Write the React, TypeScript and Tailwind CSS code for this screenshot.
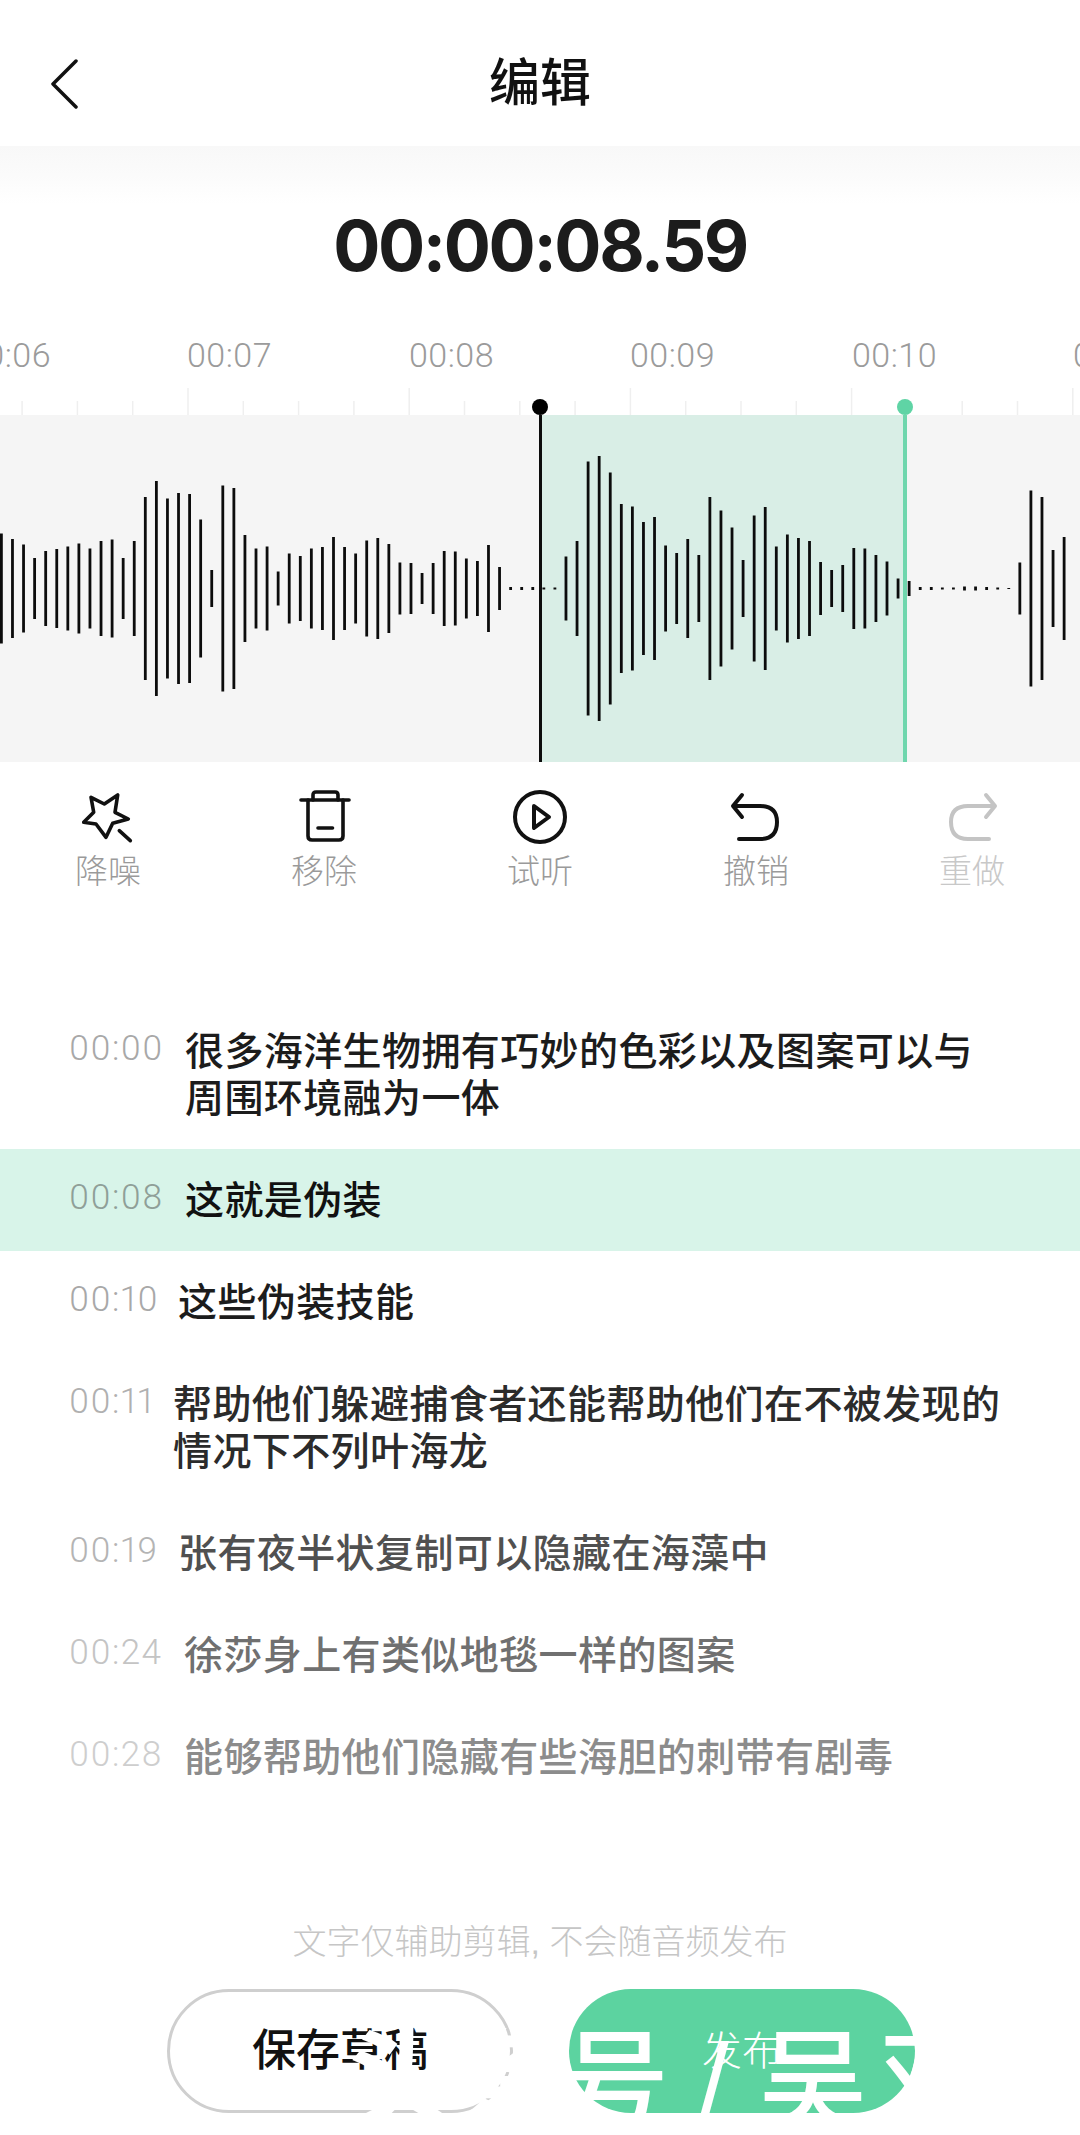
const CJK = "font-['Liberation_Sans','Noto_Sans_CJK_SC',sans-serif]"

// [bar height] on an 11.07px grid starting at x=1.4
const bars = [
  110, 99, 88, 61, 75, 79, 84, 90, 80, 95, 98, 61, 95, 183, 215, 180, 191, 189, 138, 37, 206, 201, 107, 80, 84, 34, 70,
  65, 80, 83, 103, 83, 70, 96, 101, 89, 52, 51, 31, 51, 75, 74, 60, 55, 87, 43, 3, 3, 3, 2, 2, 64, 95, 254, 265, 232,
  169, 164, 133, 143, 86, 71, 99, 67, 183, 156, 122, 57, 146, 163, 84, 108, 101, 95, 53, 37, 47, 81, 80, 67, 54, 20, 15,
  3, 3, 2, 2, 4, 4, 3, 2, 1, 52, 196, 183, 77, 103,
]

const rows = [
  { time: '00:00', timeColor: 'text-[#a8a8a8]', color: 'text-[#1c1c1c]', lines: ['很多海洋生物拥有巧妙的色彩以及图案可以与', '周围环境融为一体'], indent: 'w-[185px]' },
  { time: '00:08', timeColor: 'text-[#8f9f98]', color: 'text-[#111]', lines: ['这就是伪装'], indent: 'w-[185px]', active: true },
  { time: '00:10', timeColor: 'text-[#a8a8a8]', color: 'text-[#1c1c1c]', lines: ['这些伪装技能'], indent: 'w-[178px]' },
  { time: '00:11', timeColor: 'text-[#b0b0b0]', color: 'text-[#2b2b2b]', lines: ['帮助他们躲避捕食者还能帮助他们在不被发现的', '情况下不列叶海龙'], indent: 'w-[173px]' },
  { time: '00:19', timeColor: 'text-[#b4b4b4]', color: 'text-[#505050]', lines: ['张有夜半状复制可以隐藏在海藻中'], indent: 'w-[178px]' },
  { time: '00:24', timeColor: 'text-[#c4c4c4]', color: 'text-[#707070]', lines: ['徐莎身上有类似地毯一样的图案'], indent: 'w-[184px]' },
  { time: '00:28', timeColor: 'text-[#cecece]', color: 'text-[#8c8c8c]', lines: ['能够帮助他们隐藏有些海胆的刺带有剧毒'], indent: 'w-[184px]' },
]

const tools = [
  { label: '降噪', color: 'text-[#9a9a9a]', icon: <Star /> },
  { label: '移除', color: 'text-[#9a9a9a]', icon: <Bin /> },
  { label: '试听', color: 'text-[#9a9a9a]', icon: <Play /> },
  { label: '撤销', color: 'text-[#9a9a9a]', icon: <Undo /> },
  { label: '重做', color: 'text-[#c8c8c8]', icon: <Redo /> },
]

function Star() {
  return (
    <svg width="60" height="54" viewBox="0 0 60 54" fill="none" stroke="#111" strokeWidth="3.6" strokeLinejoin="round" strokeLinecap="round">
      <path d="M13 7.3 L26.3 14 L39.7 5 L37 22.3 L50.3 29 L34.7 33.3 L28 47.3 L18 34 L5.7 32.3 L15.7 22.3 Z" />
      <path d="M41.3 40.7 L52.3 50.7" />
    </svg>
  )
}

function Bin() {
  return (
    <svg width="60" height="54" viewBox="0 0 60 54" fill="none" stroke="#111" strokeWidth="3.6" strokeLinejoin="round" strokeLinecap="round">
      <path d="M7 10 H55" />
      <path d="M19 10 V5 Q19 2 22 2 H41 Q44 2 44 5 V10" />
      <path d="M14 10 V46 Q14 50 18 50 H45 Q49 50 49 46 V10" />
      <path d="M24 38 H38.5" />
    </svg>
  )
}

function Play() {
  return (
    <svg width="60" height="54" viewBox="0 0 60 54" fill="none" stroke="#111" strokeWidth="4" strokeLinejoin="round">
      <circle cx="30" cy="27" r="25" />
      <path d="M24 16 L39 27 L24 38 Z" />
    </svg>
  )
}

function Undo() {
  return (
    <svg width="60" height="54" viewBox="0 0 60 54" fill="none" stroke="#111" strokeWidth="4" strokeLinejoin="round" strokeLinecap="round">
      <path d="M16 5 L7 16 L16 27" />
      <path d="M8 16 H34 Q51 16 51 32 Q51 49 34 49 H13" />
    </svg>
  )
}

function Redo() {
  return (
    <svg width="60" height="54" viewBox="0 0 60 54" fill="none" stroke="#c4c4c4" strokeWidth="4" strokeLinejoin="round" strokeLinecap="round">
      <path d="M44 5 L53 16 L44 27" />
      <path d="M52 16 H26 Q9 16 9 32 Q9 49 26 49 H47" />
    </svg>
  )
}

function Ruler() {
  const ticks = []
  for (let i = -1; i < 20; i++) {
    const x = 188 + (i - 3) * 55.3
    const major = (i - 3) % 4 === 0
    ticks.push(<line key={i} x1={x} x2={x} y1={major ? 0 : 13} y2="27" stroke="#efefef" strokeWidth="1.5" />)
  }
  return (
    <svg width="1080" height="27" className="block">
      {ticks}
    </svg>
  )
}

function Wave() {
  return (
    <svg width="1080" height="347" className="absolute left-0 top-0">
      {bars.map((h, i) => (
        <rect key={i} x={0 + i * 11.07} y={173.5 - h / 2} width="2.8" height={h} fill="#0c0c0c" />
      ))}
    </svg>
  )
}

export default function App() {
  return (
    <div className={`relative w-[1080px] h-[2135px] overflow-hidden bg-white ${CJK}`}>
      {/* nav */}
      <div className="relative flex h-[146px] items-center justify-center pt-[20px]">
        <svg width="30" height="50" viewBox="0 0 30 50" fill="none" stroke="#111" strokeWidth="3.5" strokeLinecap="round" strokeLinejoin="round" className="absolute left-[49px] top-[59px]">
          <path d="M27 2 L4 25 L27 48" />
        </svg>
        <div className="text-[51px] font-medium leading-none text-[#111]">编辑</div>
      </div>
      <div className="h-[58px] bg-gradient-to-b from-[#f8f8f8] via-[#fbfbfb] to-white" />

      <div className="mt-[6px] flex h-[72px] items-center justify-center font-['Inter'] text-[70px] font-bold leading-none tracking-[-2.4px] text-[#1c1c1c]">
        00:00:08.59
      </div>

      {/* timeline labels */}
      <div className="relative mt-[53px] h-[40px] font-['Roboto'] text-[34px] font-light leading-[40px] tracking-[0.5px] text-[#9b9b9b]">
        {[
          ['00:06', 'left-[-34px]'],
          ['00:07', 'left-[187px]'],
          ['00:08', 'left-[409px]'],
          ['00:09', 'left-[630px]'],
          ['00:10', 'left-[852px]'],
          ['00:11', 'left-[1073px]'],
        ].map(([t, pos]) => (
          <span key={t} className={`absolute top-0 ${pos}`}>
            {t}
          </span>
        ))}
      </div>
      <div className="mt-[13px]">
        <Ruler />
      </div>

      {/* wave band */}
      <div className="relative flex h-[347px] bg-[#f5f5f5]">
        <div className="ml-[539px] w-[3px] bg-[#0c0c0c]" />
        <div className="w-[361px] bg-[#d9eee6]" />
        <div className="w-[4px] bg-[#6fd6ad]" />
        <Wave />
        <div className="absolute left-[532px] top-[-16px] h-4 w-4 rounded-full bg-black" />
        <div className="absolute left-[897px] top-[-16px] h-4 w-4 rounded-full bg-[#5fd4a5]" />
      </div>

      {/* tools */}
      <div className="mt-[28px] grid grid-cols-5">
        {tools.map((t) => (
          <div key={t.label} className="flex flex-col items-center">
            {t.icon}
            <div className={`mt-[8px] text-[33px] font-light leading-[40px] ${t.color}`}>{t.label}</div>
          </div>
        ))}
      </div>

      {/* transcript */}
      <div className="mt-[108px]">
        {rows.map((r) => (
          <div key={r.time} className={`flex items-start py-[27.5px] ${r.active ? 'bg-[#d8f4e9]' : ''}`}>
            <div className={`${r.indent} shrink-0 -mt-[3px] pl-[69px] font-['Roboto'] text-[35px] font-light leading-[47px] tracking-[1.4px] proportional-nums ${r.timeColor}`}>
              {r.time}
            </div>
            <div className={`text-[39px] font-medium leading-[47px] tracking-[0.4px] ${r.color}`}>
              {r.lines.map((l) => (
                <div key={l}>{l}</div>
              ))}
            </div>
          </div>
        ))}
      </div>

      {/* footer */}
      <div className="absolute bottom-[173px] left-0 right-0 text-center text-[34px] font-light leading-[40px] text-[#c6c6c6]">
        文字仅辅助剪辑, 不会随音频发布
      </div>
      <div className="absolute bottom-[22px] left-[167px] flex gap-[56px]">
        <button className="flex h-[124px] w-[346px] items-center justify-center rounded-[62px] border-[3px] border-[#cfcfcf] text-[44px] font-medium text-[#111]">
          保存草稿
        </button>
        <button className="flex h-[124px] w-[346px] items-center justify-center rounded-[62px] bg-[#5cd3a0] text-[40px] font-light text-white">
          发布
        </button>
      </div>

      {/* watermark */}
      <div className="absolute left-[345px] top-[2022px] whitespace-nowrap text-[108px] font-medium leading-[120px] text-white">
        <span className="[-webkit-text-stroke:3px_white]">头条</span>号 / 吴<span className="ml-[12px]">双</span>
      </div>
    </div>
  )
}
